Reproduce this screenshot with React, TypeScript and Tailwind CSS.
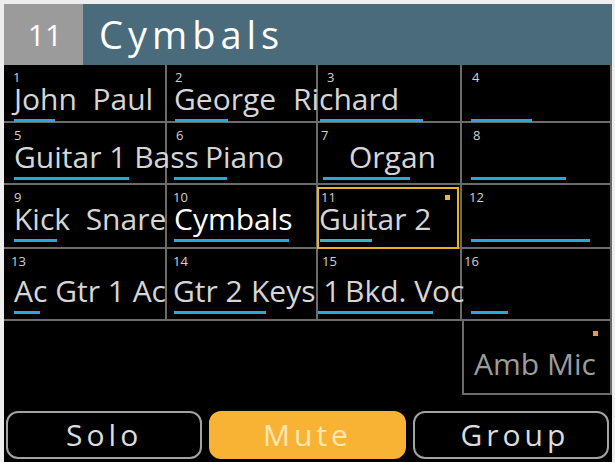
import React from 'react';

type Cell = {
  num: number;
  numCls: string;
  name?: string;
  nameCls?: string;
  bar: number;
  barCls: string;
  bright?: boolean;
  selected?: boolean;
};

type Row = { cls: string; cells: Cell[] };

const rows: Row[] = [
  {
    cls: 'h-[58px]',
    cells: [
      { num: 1, numCls: 'ml-[9px]', name: 'John\u00a0 Paul', nameCls: 'ml-[10px]', bar: 41, barCls: 'ml-[10px]' },
      { num: 2, numCls: 'ml-[8px]', name: 'George', nameCls: 'ml-[7px]', bar: 53, barCls: 'ml-[8px]' },
      { num: 3, numCls: 'ml-[9px]', name: 'Richard', nameCls: 'ml-[-25px]', bar: 103, barCls: 'ml-[2px]' },
      { num: 4, numCls: 'ml-[10px]', bar: 61, barCls: 'ml-[9px]' },
    ],
  },
  {
    cls: 'h-[62px]',
    cells: [
      { num: 5, numCls: 'ml-[10px]', name: 'Guitar 1 Bass', nameCls: 'ml-[10px]', bar: 115, barCls: 'ml-[10px]' },
      { num: 6, numCls: 'ml-[9px]', name: 'Piano', nameCls: 'ml-[38px]', bar: 53, barCls: 'ml-[7px]' },
      { num: 7, numCls: 'ml-[3px]', name: 'Organ', nameCls: 'ml-[31px]', bar: 87, barCls: 'ml-[5px]' },
      { num: 8, numCls: 'ml-[11px]', bar: 95, barCls: 'ml-[9px]' },
    ],
  },
  {
    cls: 'h-[64px]',
    cells: [
      { num: 9, numCls: 'ml-[10px]', name: 'Kick\u00a0 Snare', nameCls: 'ml-[10px]', bar: 43, barCls: 'ml-[10px]' },
      { num: 10, numCls: 'ml-[6px]', name: 'Cymbals', nameCls: 'ml-[7px]', bar: 115, barCls: 'ml-[7px]', bright: true },
      { num: 11, numCls: 'ml-[3px]', name: 'Guitar 2', nameCls: 'ml-[1px]', bar: 52, barCls: 'ml-[2px]', selected: true },
      { num: 12, numCls: 'ml-[7px]', bar: 119, barCls: 'ml-[9px]' },
    ],
  },
  {
    cls: 'h-[72px]',
    cells: [
      { num: 13, numCls: 'ml-[7px]', name: 'Ac Gtr 1 Ac', nameCls: 'ml-[10px]', bar: 26, barCls: 'ml-[10px]' },
      { num: 14, numCls: 'ml-[6px]', name: 'Gtr 2', nameCls: 'ml-[6px]', bar: 92, barCls: 'ml-[7px]' },
      { num: 15, numCls: 'ml-[4px]', name: 'Keys 1', nameCls: 'ml-[-67px]', bar: 115, barCls: 'ml-0' },
      { num: 16, numCls: 'ml-[2px]', name: 'Bkd. Voc', nameCls: 'ml-[-117px]', bar: 37, barCls: 'ml-[9px]' },
    ],
  },
];

const ChannelCell: React.FC<{ cell: Cell }> = ({ cell }) => (
  <div className="relative flex flex-col border-r-2 border-[#6b6b6b] min-w-0">
    <div className={`text-[13px] leading-[13px] mt-[6px] text-[#d2d2d2] ${cell.numCls}`}>{cell.num}</div>
    <div className="flex-1" />
    <div
      className={`text-[30px] leading-[30px] whitespace-nowrap ${cell.bright ? 'text-white' : 'text-[#d6d6d6]'} ${cell.nameCls ?? ''}`}
    >
      {cell.name ?? '\u00a0'}
    </div>
    <div
      className={`h-[3px] mt-[5px] mb-[5px] ${cell.selected ? 'bg-[#38b2c6]' : 'bg-[#29a7dd]'} ${cell.barCls}`}
      style={{ width: cell.bar }}
    />
    {cell.selected && (
      <>
        <div className="absolute top-[2px] left-[-1px] right-[1px] bottom-[-2px] border-2 border-[#e8b526]" />
        <div className="absolute top-[10px] right-[10px] w-[5px] h-[5px] bg-[#f2b53a]" />
      </>
    )}
  </div>
);

const App: React.FC = () => {
  return (
    <div className="w-[615px] h-[462px] bg-[#eeeeee] pt-[4px] pl-[4px] pr-[3px] font-['Open_Sans',sans-serif]">
      <div className="h-full bg-black flex flex-col">
        <header className="h-[61px] flex shrink-0">
          <div className="w-[79px] bg-[#9b9b9b] flex items-center justify-center text-white text-[30px] pl-[3px]">
            11
          </div>
          <div className="flex-1 bg-[#4a6b7b] flex items-center pl-[16px] text-white text-[38px] tracking-[5px]">
            Cymbals
          </div>
        </header>

        <div className="shrink-0">
          {rows.map((row, i) => (
            <div
              key={i}
              className={`grid grid-cols-[163px_151px_144px_1fr] border-b-2 border-[#6b6b6b] ${row.cls}`}
            >
              {row.cells.map((cell) => (
                <ChannelCell key={cell.num} cell={cell} />
              ))}
            </div>
          ))}
        </div>

        <div className="flex justify-end shrink-0">
          <div className="relative w-[150px] h-[74px] border-l-2 border-r-2 border-b-2 border-[#6b6b6b] flex items-center justify-center">
            <div className="absolute top-[10px] right-[12px] w-[5px] h-[5px] bg-[#e59a52]" />
            <span className="text-[30px] leading-[30px] text-[#9c9c9c] mt-[14px] ml-[-4px]">Amb Mic</span>
          </div>
        </div>

        <div className="flex-1" />

        <div className="grid grid-cols-3 gap-[7px] pl-[2px] pr-[3px] pb-[3px]">
          <button className="h-[48px] rounded-[12px] border-2 border-[#a3a3a3] bg-black text-[#dcdcdc] text-[30px] leading-[30px] tracking-[4px]">
            Solo
          </button>
          <button className="h-[48px] rounded-[12px] border-2 border-[#f7b334] bg-[#f8b334] text-[#fde7b5] text-[30px] leading-[30px] tracking-[4px]">
            Mute
          </button>
          <button className="h-[48px] rounded-[12px] border-2 border-[#a3a3a3] bg-black text-[#dcdcdc] text-[30px] leading-[30px] tracking-[4px] pl-[8px]">
            Group
          </button>
        </div>
      </div>
    </div>
  );
};

export default App;
